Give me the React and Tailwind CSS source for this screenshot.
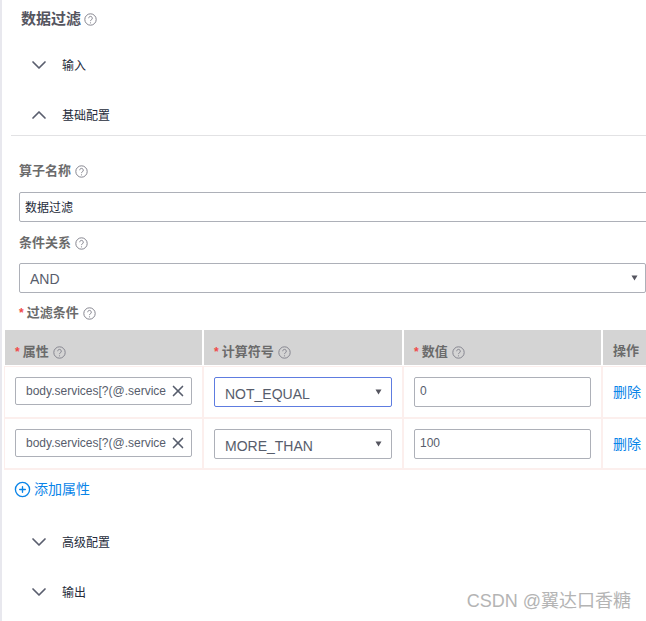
import { ChevronDown, ChevronUp, X, CirclePlus } from 'lucide-react'

const fontStack = "font-['Liberation_Sans','Noto_Sans_CJK_SC',sans-serif]"

function Help({ className = '' }) {
  return (
    <svg viewBox="0 0 13 13" className={`h-[13px] w-[13px] shrink-0 text-[#85858f] ${className}`} fill="none" stroke="currentColor">
      <circle cx="6.5" cy="6.5" r="5.7" strokeWidth="1" />
      <path d="M4.7 5.2a1.8 1.8 0 1 1 2.8 1.5c-.7.4-1 .8-1 1.4" strokeWidth="1" />
      <circle cx="6.5" cy="9.8" r="0.6" fill="currentColor" stroke="none" />
    </svg>
  )
}

function Caret() {
  return (
    <svg viewBox="0 0 7 6" className="h-[6px] w-[7px] shrink-0 text-[#55555f]" fill="currentColor">
      <path d="M0.5 0.5h6L3.5 5.5z" />
    </svg>
  )
}

function Star() {
  return <span className="mr-[3px] text-[12px] font-bold text-[#f04a4a]">*</span>
}

function Section({ title, open, className = '' }) {
  const Icon = open ? ChevronUp : ChevronDown
  return (
    <div className={`flex h-5 items-center pl-[25px] ${className}`}>
      <Icon className="h-6 w-6 shrink-0 text-[#5a5e6e]" strokeWidth={1.7} />
      <span className="ml-[11px] pt-[2px] text-[12px] text-[#252b3a]">{title}</span>
    </div>
  )
}

function Label({ text, required, className = '' }) {
  return (
    <div className={`flex h-5 items-center pb-[2px] text-[13px] font-bold text-[#6b6b6b] ${className}`}>
      {required && <Star />}
      <span>{text}</span>
      <Help className="ml-[4px]" />
    </div>
  )
}

function HeaderCell({ text, required }) {
  return (
    <div className="pb-[1px] pr-[2px]">
      <div className="flex h-[35px] items-center bg-[#d4d4d4] pl-[10px] pt-[11px]">
        <Label text={text} required={required} />
      </div>
    </div>
  )
}

function Row({ select, value, first }) {
  const selectBorder = select === 'NOT_EQUAL' ? 'border-[#5e7ce0]' : 'border-[#adb0b8]'
  const cell = first
    ? 'h-[53px] border-t border-r-2 border-b-2 border-[#fcefed] px-[10px] pt-[10px]'
    : 'h-[51px] border-r-2 border-b-2 border-[#fcefed] px-[10px] pt-[10px]'
  return (
    <>
      <div className={`${cell} shadow-[-1px_0_0_#fcefed]`}>
        <div className="flex h-[28px] items-center rounded-[2px] border border-[#adb0b8] pl-[10px] pr-[4px]">
          <span className="flex-1 overflow-hidden whitespace-nowrap text-[12px] text-[#575d6c]">body.services[?(@.service</span>
          <X className="h-[18px] w-[18px] shrink-0 text-[#575d6c]" strokeWidth={2.2} />
        </div>
      </div>
      <div className={cell}>
        <div className={`flex h-[30px] items-center justify-between rounded-[2px] border ${selectBorder} pl-[10px] pr-[9px]`}>
          <span className="pt-[4px] text-[14px] text-[#575d6c]">{select}</span>
          <Caret />
        </div>
      </div>
      <div className={cell}>
        <div className="flex h-[30px] items-center rounded-[2px] border border-[#adb0b8] pb-[2px] pl-[5px] text-[12px] text-[#575d6c]">
          {value}
        </div>
      </div>
      <div className={`${cell} !pt-[15px] text-[14px] leading-[20px] text-[#0a84e8]`}>
        删除
      </div>
    </>
  )
}

export default function App() {
  return (
    <div className={`relative h-[621px] w-[646px] overflow-hidden border-l-2 border-[#e8e8ee] bg-white ${fontStack}`}>
      <div className="flex h-5 items-center pl-[19px] pt-[19px] text-[15px] font-bold text-[#55555f]">
        <span>数据过滤</span>
        <Help className="ml-[3px]" />
      </div>

      <Section title="输入" className="mt-[35px]" />
      <Section title="基础配置" open className="mt-[30px]" />
      <div className="ml-[9px] mt-[10px] border-b border-[#e2e2e4]" />

      <div className="pl-[17px]">
        <Label text="算子名称" className="mt-[26px]" />
        <div className="mt-[10px] flex h-[30px] w-[640px] items-center rounded-[2px] border border-[#adb0b8] pl-[5px] pt-[2px] text-[12px] text-[#252b3a]">
          数据过滤
        </div>
        <Label text="条件关系" className="mt-[12px]" />
        <div className="mt-[9px] flex h-[30px] w-[627px] items-center justify-between rounded-[2px] border border-[#adb0b8] pl-[10px] pr-[7px]">
          <span className="pt-[2px] text-[14px] text-[#575d6c]">AND</span>
          <Caret />
        </div>
        <Label text="过滤条件" required className="mt-[11px]" />
      </div>

      <div className="ml-[3px] mt-[6px] grid w-[660px] grid-cols-[199px_200px_199px_62px]">
        <HeaderCell text="属性" required />
        <HeaderCell text="计算符号" required />
        <HeaderCell text="数值" required />
        <div className="pb-[1px]">
          <div className="flex h-[35px] items-center bg-[#d4d4d4] pl-[10px] pt-[7px] text-[13px] font-bold text-[#6b6b6b]">操作</div>
        </div>
        <Row select="NOT_EQUAL" value="0" first />
        <Row select="MORE_THAN" value="100" />
      </div>

      <div className="ml-[12px] mt-[9px] flex h-5 items-center text-[14px] text-[#0a84e8]">
        <CirclePlus className="mr-[3px] h-[17px] w-[17px]" strokeWidth={1.9} />
        添加属性
      </div>

      <Section title="高级配置" className="mt-[33px]" />
      <Section title="输出" className="mt-[30px]" />

      <div className="absolute bottom-[6px] right-[15px] text-[18px] text-[#b4b4b4]">CSDN @翼达口香糖</div>
    </div>
  )
}
